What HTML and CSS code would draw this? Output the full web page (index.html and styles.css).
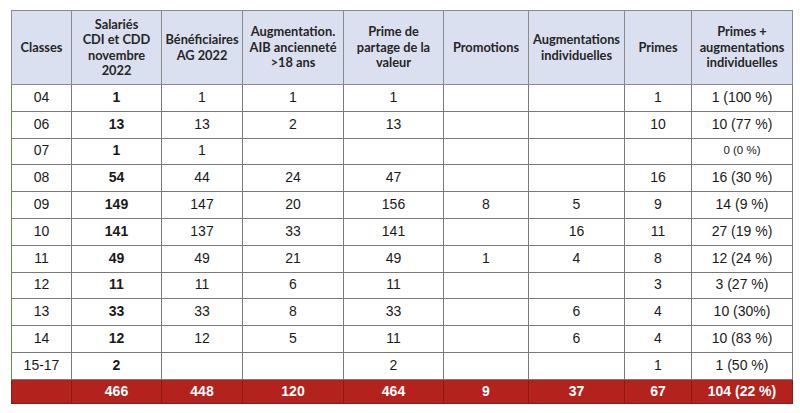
FILE: index.html
```html
<!DOCTYPE html>
<html lang="fr">
<head>
<meta charset="utf-8">
<title>Tableau</title>
<link rel="stylesheet" href="styles.css">
</head>
<body>
<div class="wrap">
<table class="grid">
  <colgroup>
    <col class="c1"><col class="c2"><col class="c3"><col class="c4"><col class="c5">
    <col class="c6"><col class="c7"><col class="c8"><col class="c9">
  </colgroup>
  <thead>
    <tr>
      <th>Classes</th>
      <th>Salariés<br>CDI et CDD<br>novembre<br>2022</th>
      <th>Bénéficiaires<br>AG 2022</th>
      <th>Augmentation.<br>AIB ancienneté<br>&gt;18 ans</th>
      <th>Prime de<br>partage de la<br>valeur</th>
      <th>Promotions</th>
      <th>Augmentations<br>individuelles</th>
      <th>Primes</th>
      <th>Primes +<br>augmentations<br>individuelles</th>
    </tr>
  </thead>
  <tbody>
    <tr><td>04</td><td class="b">1</td><td>1</td><td>1</td><td>1</td><td></td><td></td><td>1</td><td>1 (100 %)</td></tr>
    <tr><td>06</td><td class="b">13</td><td>13</td><td>2</td><td>13</td><td></td><td></td><td>10</td><td>10 (77 %)</td></tr>
    <tr><td>07</td><td class="b">1</td><td>1</td><td></td><td></td><td></td><td></td><td></td><td class="sm">0 (0 %)</td></tr>
    <tr><td>08</td><td class="b">54</td><td>44</td><td>24</td><td>47</td><td></td><td></td><td>16</td><td>16 (30 %)</td></tr>
    <tr><td>09</td><td class="b">149</td><td>147</td><td>20</td><td>156</td><td>8</td><td>5</td><td>9</td><td>14 (9 %)</td></tr>
    <tr><td>10</td><td class="b">141</td><td>137</td><td>33</td><td>141</td><td></td><td>16</td><td>11</td><td>27 (19 %)</td></tr>
    <tr><td>11</td><td class="b">49</td><td>49</td><td>21</td><td>49</td><td>1</td><td>4</td><td>8</td><td>12 (24 %)</td></tr>
    <tr><td>12</td><td class="b">11</td><td>11</td><td>6</td><td>11</td><td></td><td></td><td>3</td><td>3 (27 %)</td></tr>
    <tr><td>13</td><td class="b">33</td><td>33</td><td>8</td><td>33</td><td></td><td>6</td><td>4</td><td>10 (30%)</td></tr>
    <tr><td>14</td><td class="b">12</td><td>12</td><td>5</td><td>11</td><td></td><td>6</td><td>4</td><td>10 (83 %)</td></tr>
    <tr><td>15-17</td><td class="b">2</td><td></td><td></td><td>2</td><td></td><td></td><td>1</td><td>1 (50 %)</td></tr>
  </tbody>
  <tfoot>
    <tr><td></td><td>466</td><td>448</td><td>120</td><td>464</td><td>9</td><td>37</td><td>67</td><td>104 (22 %)</td></tr>
  </tfoot>
</table>
</div>
</body>
</html>
```
FILE: styles.css
```css
html, body {
  margin: 0;
  padding: 0;
  background: #ffffff;
}
.wrap {
  padding: 10px 0 0 11px;
}
.grid {
  border-collapse: collapse;
  table-layout: fixed;
  width: 781px;
  font-family: "Liberation Sans", Arial, sans-serif;
  font-size: 14px;
  color: #1a1a1a;
}
.c1 { width: 60px; }
.c2 { width: 90px; }
.c3 { width: 81px; }
.c4 { width: 101px; }
.c5 { width: 100px; }
.c6 { width: 85px; }
.c7 { width: 96px; }
.c8 { width: 67px; }
.c9 { width: 101px; }

.grid th {
  height: 73px;
  padding: 0 2px;
  background: #dbe0f0;
  border: 1px solid #8a8a8a;
  font-family: Lato, "Open Sans", sans-serif;
  font-weight: 700;
  font-size: 12.8px;
  line-height: 15.5px;
  color: #262626;
  text-align: center;
  vertical-align: middle;
}
.grid tbody td {
  height: 23.8px;
  padding: 0 2px 2px;
  border: 1px solid #7a7a7a;
  text-align: center;
  vertical-align: middle;
  line-height: 16px;
}
.grid tbody td:first-child {
  border-left-color: #5e9a3e;
}
.grid td.b {
  font-weight: 700;
}
.grid td.sm {
  font-size: 11.5px;
}
.grid tfoot td {
  height: 22px;
  padding: 0 2px 1px;
  background: #b3221d;
  border: 1px solid #8a1a16;
  color: #ffffff;
  font-weight: 700;
  text-align: center;
  vertical-align: middle;
  line-height: 16px;
}
```
